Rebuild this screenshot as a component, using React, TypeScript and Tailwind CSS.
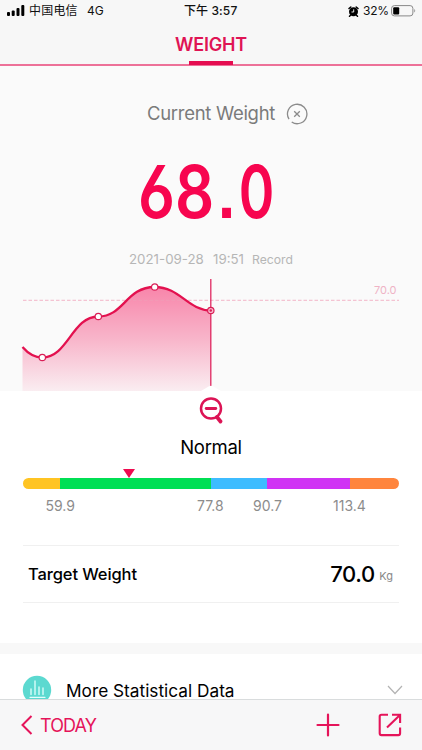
const ranges = [
  { color: 'bg-[#ffc423]', width: 'w-[37px]' },
  { color: 'bg-[#00df54]', width: 'w-[151px]' },
  { color: 'bg-[#3dbcff]', width: 'w-[56px]' },
  { color: 'bg-[#d033f4]', width: 'w-[83px]' },
  { color: 'bg-[#ff853d]', width: 'w-[49px]' },
];

const points = [
  { x: 42.3, y: 79.5 },
  { x: 98.3, y: 38.5 },
  { x: 154.7, y: 9 },
];

const curve =
  'M22.5 69C28.500 76 35 79.500 42.300 79.500C68 79.500 72 38.500 98.300 38.500C124 38.500 126 9 154.700 9C180 9 188 32.500 211 32.500';

function StatusBar() {
  return (
    <div className="flex h-[22px] items-center pl-[7px] pr-[6px] text-[12px] leading-none text-[#111]">
      <svg width="18" height="12" viewBox="0 0 18 12" className="shrink-0" fill="#000">
        <rect x="0" y="7" width="3" height="4" rx="1" />
        <rect x="4.700" y="5.500" width="3" height="5.500" rx="1" />
        <rect x="9.500" y="3" width="3" height="8" rx="1" />
        <rect x="14.300" y="0" width="3" height="11" rx="1" />
      </svg>
      <span className="ml-[4px] w-[50px] whitespace-nowrap text-[12px] tracking-[0.200px]">中国电信</span>
      <span className="ml-[8px] w-[97px] text-[12px]">4G</span>
      <span className="w-[60px] whitespace-nowrap text-[12px] font-medium tracking-[0.100px]">
        下午 3:57
      </span>
      <span className="flex-1" />
      <svg width="11" height="11" viewBox="0 0 11 11">
        <circle cx="5.500" cy="5.800" r="4.500" fill="#000" />
        <path d="M1 2.500L2.800 1M10 2.500L8.200 1M2.300 9.500L1.500 10.300M8.700 9.500L9.500 10.300" stroke="#000" strokeWidth="1.500" strokeLinecap="round" />
        <path d="M5.700 3.300V6H3.500" stroke="#fff" strokeWidth="0.900" fill="none" />
      </svg>
      <span className="ml-[4px] w-[26px] text-[12px] tracking-[-0.200px]">32%</span>
      <svg width="25" height="12" viewBox="0 0 25 12" className="ml-[2px]">
        <rect x="0.600" y="0.600" width="21.300" height="10.300" rx="2.800" fill="none" stroke="#888" />
        <rect x="2.200" y="2.200" width="6" height="7.200" rx="1" fill="#000" />
        <path d="M23.300 4V7.600C24.500 7 24.500 4.600 23.300 4Z" fill="#888" />
      </svg>
    </div>
  );
}

function WeightChart() {
  return (
    <svg width="422" height="113" viewBox="0 0 422 113" className="block shrink-0">
      <defs>
        <linearGradient id="area" x1="0" y1="9" x2="0" y2="113" gradientUnits="userSpaceOnUse">
          <stop offset="0" stopColor="#f885aa" />
          <stop offset="0.500" stopColor="#f8b5ca" />
          <stop offset="1" stopColor="#faedf1" />
        </linearGradient>
      </defs>
      <path d={curve + 'V113H22.500Z'} fill="url(#area)" />
      <path d="M23 22.300H399" stroke="#ef9db7" strokeOpacity="0.750" strokeWidth="1" strokeDasharray="3.500 2" />
      <path d={curve} fill="none" stroke="#e3114f" strokeWidth="2.300" />
      <path d="M210.800 1V109" stroke="#df2861" strokeWidth="1.300" />
      {points.map((p) => (
        <circle key={p.x} cx={p.x} cy={p.y} r="3.200" fill="#fff" stroke="#d91e56" strokeWidth="1.200" />
      ))}
      <circle cx="210.800" cy="32.500" r="3.200" fill="#f8b5ca" stroke="#d91e56" strokeWidth="1.200" />
      <circle cx="210.800" cy="32.500" r="1.200" fill="#d91e56" />
      <path d="M201 113L209 108.300Q211 107.300 213 108.300L221 113Z" fill="#fff" />
      <text x="374" y="16" fontSize="11" textLength="22.500" fill="#efb3c5">70.0</text>
    </svg>
  );
}

export default function App() {
  return (
    <div className="flex h-[750px] w-[422px] flex-col overflow-hidden bg-white font-['Inter','Noto_Sans_CJK_SC',sans-serif] text-black">
      <header className="h-[66px] shrink-0 bg-[#f7f7f7]">
        <StatusBar />
        <div className="flex h-[44px] flex-col items-center border-b-2 border-[#ed7198]">
          <h1 className="mt-[10px] text-[18px] font-semibold leading-[26px] tracking-[-0.200px] text-[#df1454]">WEIGHT</h1>
          <span className="mt-[3px] h-[4px] w-[44px] shrink-0 bg-[#e50c50]" />
        </div>
      </header>

      <section className="flex h-[325px] shrink-0 flex-col items-center bg-[#fafafa]">
        <div className="mt-[35px] flex h-[26px] w-full items-center pl-[147px]">
          <span className="w-[139px] whitespace-nowrap text-[18.500px] tracking-[-0.300px] text-[#7b7b7b]">Current Weight</span>
          <svg width="22" height="22" viewBox="0 0 22 22" fill="none" stroke="#8b8b8b">
            <path d="M5.700 19A9.700 9.700 0 1 0 3 16.200" strokeWidth="1.300" />
            <path d="M8.200 8.200L13.800 13.800M13.800 8.200L8.200 13.800" strokeWidth="1.300" />
          </svg>
        </div>
        <div className="mt-[25px] flex h-[80px] w-full items-center pl-[138px]">
          <span className="origin-left scale-x-[0.840] whitespace-nowrap text-[73px] font-semibold leading-[80px] text-[#f7054f] [font-feature-settings:'ss01','cv03','ss07']">
            68<span className="ml-[3px] mr-[3px]">.</span>
            <span className="inline-block origin-left scale-x-[0.880]">0</span>
          </span>
        </div>
        <div className="mt-[16px] flex h-[24px] w-full items-center whitespace-nowrap pl-[129px] text-[#b6b6b6]">
          <span className="w-[84px] text-[13.300px]">2021-09-28</span>
          <span className="w-[39px] text-[13.300px]">19:51</span>
          <span className="text-[12.200px]">Record</span>
        </div>
        <div className="mt-[6px]">
          <WeightChart />
        </div>
      </section>

      <section className="flex h-[252px] shrink-0 flex-col items-center px-[22px]">
        <svg width="26" height="30" viewBox="0 0 26 30" className="mt-[4px] shrink-0" fill="none" stroke="#dc1455" strokeLinecap="round">
          <circle cx="13" cy="13.500" r="10" strokeWidth="2.500" />
          <path d="M8.200 13.500H17.800" strokeWidth="2.800" />
          <path d="M19 22L22.500 26.500" strokeWidth="3.800" />
        </svg>
        <p className="mt-[8px] text-[18.500px] leading-[28px] tracking-[-0.300px]">Normal</p>
        <div className="flex w-full flex-col pl-px pt-[8px]">
          <svg width="12" height="9" viewBox="0 0 12 9" className="ml-[100px]">
            <path d="M0 0H12L6 9Z" fill="#ee0b50" />
          </svg>
          <div className="flex h-[11px] w-[376px] overflow-hidden rounded-full">
            {ranges.map((r) => (
              <span key={r.color} className={`${r.color} ${r.width} shrink-0`} />
            ))}
          </div>
          <div className="mt-[7px] flex h-[18px] items-center whitespace-nowrap text-[14px] text-[#8c8c8c]">
            <span className="ml-[22.500px] w-[151.500px]">59.9</span>
            <span className="w-[56px]">77.8</span>
            <span className="w-[80px]">90.7</span>
            <span>113.4</span>
          </div>
        </div>
        <div className="ml-px mt-[31px] flex h-[58px] w-[376px] shrink-0 items-center self-start border-y border-[#f0f0f0] pl-[5px] pr-[6px]">
          <span className="flex-1 text-[16.500px] font-medium tracking-[-0.100px]">Target Weight</span>
          <span className="w-[49px] whitespace-nowrap text-[22px] font-medium tracking-[-0.400px]">70.0</span>
          <span className="mt-[5px] text-[11px] text-[#888]">Kg</span>
        </div>
      </section>

      <div className="h-[11px] shrink-0 bg-[#f8f8f8]" />

      <section className="flex h-[45px] shrink-0 items-start overflow-hidden pl-[22px] pr-[18px] pt-[21px]">
        <svg width="30" height="30" viewBox="0 0 30 30" className="shrink-0">
          <circle cx="15" cy="15" r="14.200" fill="#5cd9d0" />
          <path d="M9 14V19.500M13 6V19.500M17 12V19.500M21 13V19.500M8 22.300H23" stroke="#e2fffc" strokeWidth="1.300" strokeLinecap="round" />
        </svg>
        <span className="ml-[14px] mt-[7px] flex-1 text-[17.250px] leading-[17px]">More Statistical Data</span>
        <svg width="18" height="12" viewBox="0 0 18 12" className="mt-[9px]" fill="none" stroke="#b3b3b3" strokeWidth="1.200">
          <path d="M2 2L9 9.500L16 2" />
        </svg>
      </section>

      <footer className="flex h-[51px] shrink-0 items-center border-t border-[#d9dcdd] bg-[#f7f7f8] pl-[20px] pr-[20px] text-[#e5145a]">
        <svg width="14" height="20" viewBox="0 0 14 20" fill="none" stroke="currentColor" strokeWidth="2">
          <path d="M11.500 1L2.500 10L11.500 19" />
        </svg>
        <span className="ml-[6px] flex-1 text-[18px] tracking-[-0.900px]">TODAY</span>
        <svg width="24" height="24" viewBox="0 0 24 24" fill="none" stroke="currentColor" strokeWidth="2.200" strokeLinecap="round">
          <path d="M12 1.500V22.500M1.500 12H22.500" />
        </svg>
        <svg width="24" height="24" viewBox="0 0 24 24" className="ml-[38px]" fill="none" stroke="currentColor" strokeWidth="2.100">
          <path d="M10 1.700H3.500Q1.700 1.700 1.700 3.500V20.300Q1.700 22.100 3.500 22.100H20.300Q22.100 22.100 22.100 20.300V14.500" />
          <path d="M14 1.700H22.100V10M21.700 2.200L9 14.500" />
        </svg>
      </footer>
    </div>
  );
}
